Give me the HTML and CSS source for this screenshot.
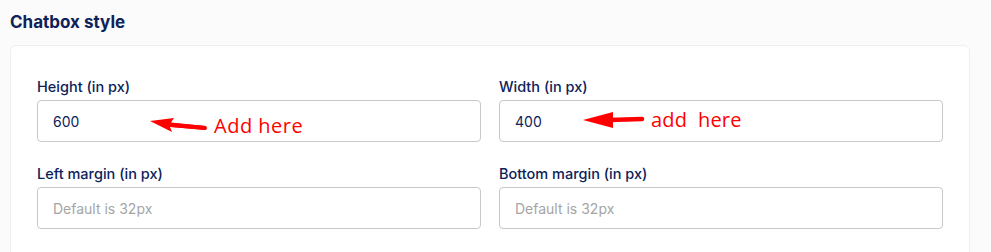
FILE: index.html
```html
<!DOCTYPE html>
<html>
<head>
  <title>Chatbox style</title>
  <link rel="stylesheet" href="styles.css">
</head>
<body>
  <h1 class="section-title">Chatbox style</h1>
  <div class="card">
    <div class="form-grid">
      <div class="form-group">
        <label>Height (in px)</label>
        <input type="text" value="600">
        <div class="note note-height">
          <svg class="arrow" width="58" height="16" viewBox="0 0 58 16">
            <polygon points="0,3 24,0 21,4.5 56,8 56,12 20,9 22,14" fill="#f00"/>
            <line x1="22" y1="7" x2="55" y2="10" stroke="#f00" stroke-width="4" stroke-linecap="round"/>
          </svg>
          <span>Add here</span>
        </div>
      </div>
      <div class="form-group">
        <label>Width (in px)</label>
        <input type="text" value="400">
        <div class="note note-width">
          <svg class="arrow" width="62" height="16" viewBox="0 0 62 16">
            <polygon points="0,8 30,0 30,16" fill="#f00"/>
            <line x1="26" y1="8" x2="59" y2="7" stroke="#f00" stroke-width="4.5" stroke-linecap="round"/>
          </svg>
          <span>add&nbsp; here</span>
        </div>
      </div>
      <div class="form-group">
        <label>Left margin (in px)</label>
        <input type="text" placeholder="Default is 32px">
      </div>
      <div class="form-group">
        <label>Bottom margin (in px)</label>
        <input type="text" placeholder="Default is 32px">
      </div>
    </div>
  </div>
</body>
</html>
```

FILE: styles.css
```css
body {
  margin: 0;
  padding: 12px 21px 0 10px;
  font-family: Inter, "Noto Sans", Arial, sans-serif;
  background-color: #fbfbfb;
}
.section-title {
  margin: 0 0 13px;
  font-size: 17px;
  line-height: 20px;
  font-weight: 700;
  color: #0d2259;
}
.card {
  background-color: white;
  border: 1px solid #efefef;
  border-radius: 6px;
  padding: 32px 26px 40px;
}
.form-grid {
  display: grid;
  grid-template-columns: 1fr 1fr;
  column-gap: 18px;
  row-gap: 23px;
}
.form-group {
  position: relative;
}
label {
  display: block;
  margin-bottom: 4px;
  font-size: 14.5px;
  line-height: 18px;
  font-weight: 500;
  color: #0d2259;
}
input[type="text"] {
  width: 100%;
  height: 42px;
  padding: 0 15px;
  box-sizing: border-box;
  border: 1px solid #c9c9c9;
  border-radius: 4px;
  font-family: inherit;
  font-size: 14px;
  color: #0d2259;
  background: white;
}
input::placeholder {
  color: #a5a5a5;
}
.note {
  position: absolute;
  display: flex;
  align-items: center;
  gap: 6px;
  color: #f00;
  font-family: "Open Sans", "Noto Sans", sans-serif;
  font-size: 20px;
  line-height: 24px;
}
.note-height {
  left: 113px;
  top: 36px;
}
.note-height span {
  letter-spacing: 0.5px;
}
.note-width {
  left: 84px;
  top: 30px;
}
.note-width span {
  letter-spacing: 0.2px;
}
```
